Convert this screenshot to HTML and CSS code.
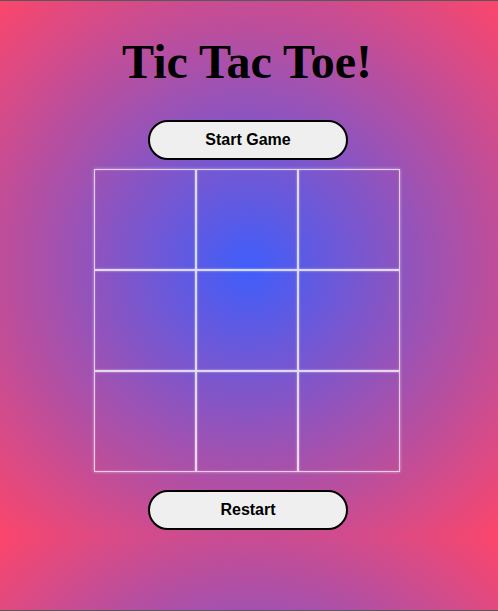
FILE: index.html
```html
<!DOCTYPE html>
<html lang="en">
<head>
<meta charset="utf-8">
<title>Tic Tac Toe!</title>
<link rel="stylesheet" href="styles.css">
</head>
<body>
  <h1 class="title">Tic Tac Toe!</h1>
  <button class="btn btn-start">Start Game</button>
  <div class="board">
    <div class="cell"></div>
    <div class="cell"></div>
    <div class="cell"></div>
    <div class="cell"></div>
    <div class="cell"></div>
    <div class="cell"></div>
    <div class="cell"></div>
    <div class="cell"></div>
    <div class="cell"></div>
  </div>
  <button class="btn btn-restart">Restart</button>
</body>
</html>
```

FILE: styles.css
```css
body {
  margin: 0;
  padding: 34px 0 6px;
  display: flex;
  flex-direction: column;
  align-items: center;
  background: radial-gradient(circle, rgb(63, 94, 251) 0%, rgb(252, 70, 107) 100%);
  font-family: "Liberation Sans", Arial, sans-serif;
}

body::after {
  content: "";
  position: fixed;
  inset: 0;
  border-top: 1px solid #585858;
  border-bottom: 1px solid #585858;
  pointer-events: none;
}

.title {
  margin: 0 0 31px;
  font-family: "Liberation Serif", "Times New Roman", serif;
  font-size: 48px;
  font-weight: bold;
  line-height: 55px;
  color: #000;
  transform: translateX(-2px);
}

.btn {
  width: 200px;
  height: 40px;
  box-sizing: border-box;
  border: 2px solid #000;
  border-radius: 20px;
  background: #efefef;
  color: #000;
  font-family: "Liberation Sans", Arial, sans-serif;
  font-size: 16px;
  font-weight: bold;
  padding: 0;
  transform: translateX(-1px);
}

.btn-start {
  margin-bottom: 9px;
}

.board {
  display: grid;
  grid-template-columns: repeat(3, 102px);
  grid-template-rows: repeat(3, 101px);
  margin-bottom: 18px;
  transform: translateX(-2px);
}

.cell {
  border: 1px solid rgba(255, 255, 255, 0.72);
  box-shadow: 0 0 3px rgba(255, 255, 255, 0.5), inset 0 0 2px rgba(255, 255, 255, 0.35);
}
```
